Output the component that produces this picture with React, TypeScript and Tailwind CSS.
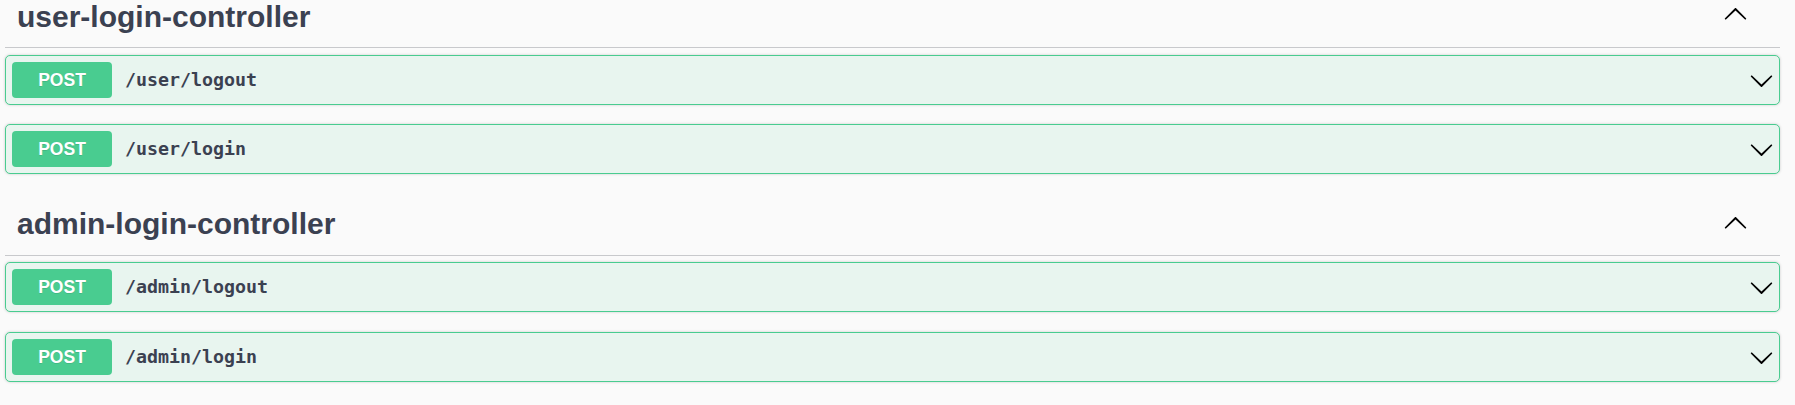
import React from "react";

const ARROW =
  "M17.418 6.109c.272-.268.709-.268.979 0s.271.701 0 .969l-7.908 7.83c-.27.268-.707.268-.979 0l-7.908-7.83c-.27-.268-.27-.701 0-.969.271-.268.709-.268.979 0L10 13.25l7.418-7.141z";

function Arrow({ up }: { up?: boolean }) {
  return (
    <svg
      width="25"
      height="25"
      viewBox="0 0 20 20"
      className={up ? "rotate-180 shrink-0" : "shrink-0"}
      aria-hidden="true"
    >
      <path d={ARROW} fill="#000" />
    </svg>
  );
}

function Op({ path, mt }: { path: string; mt: string }) {
  return (
    <div
      className={`${mt} h-[50px] flex items-center rounded-[5px] border border-[#49cc90] bg-[#e8f5ef] shadow-[0_0_3px_rgba(0,0,0,0.19)] pl-[6px] pr-[5px]`}
    >
      <div
        className="w-[100px] h-[36px] flex items-center justify-center rounded-[4px] bg-[#49cc90] text-white font-bold text-[17.5px] [text-shadow:0_1px_0_rgba(0,0,0,0.1)]"
        style={{ fontFamily: '"Liberation Sans", Arial, sans-serif' }}
      >
        POST
      </div>
      <div
        className="flex-1 pl-[13px] text-[#3b4151] font-bold text-[18.3px]"
        style={{ fontFamily: '"DejaVu Sans Mono", monospace' }}
      >
        {path}
      </div>
      <Arrow />
    </div>
  );
}

export default function App() {
  return (
    <div
      className="w-full h-[405px] overflow-hidden bg-[#fafafa] pl-[5px] pr-[15px]"
      style={{ fontFamily: '"Liberation Sans", Arial, sans-serif' }}
    >
      <div className="h-[48px] border-b border-[#c8c9cc] flex items-start justify-between pl-[12px] pr-[32px]">
        <h3 className="mt-[2px] text-[30px] leading-[30px] font-bold text-[#3b4151]">
          user-login-controller
        </h3>
        <div className="mt-[2px]">
          <Arrow up />
        </div>
      </div>
      <Op path="/user/logout" mt="mt-[7px]" />
      <Op path="/user/login" mt="mt-[19px]" />
      <div className="h-[82px] border-b border-[#c8c9cc] flex items-start justify-between pl-[12px] pr-[32px]">
        <h3 className="mt-[35px] text-[30px] leading-[30px] font-bold text-[#3b4151]">
          admin-login-controller
        </h3>
        <div className="mt-[37px]">
          <Arrow up />
        </div>
      </div>
      <Op path="/admin/logout" mt="mt-[6px]" />
      <Op path="/admin/login" mt="mt-[20px]" />
    </div>
  );
}
